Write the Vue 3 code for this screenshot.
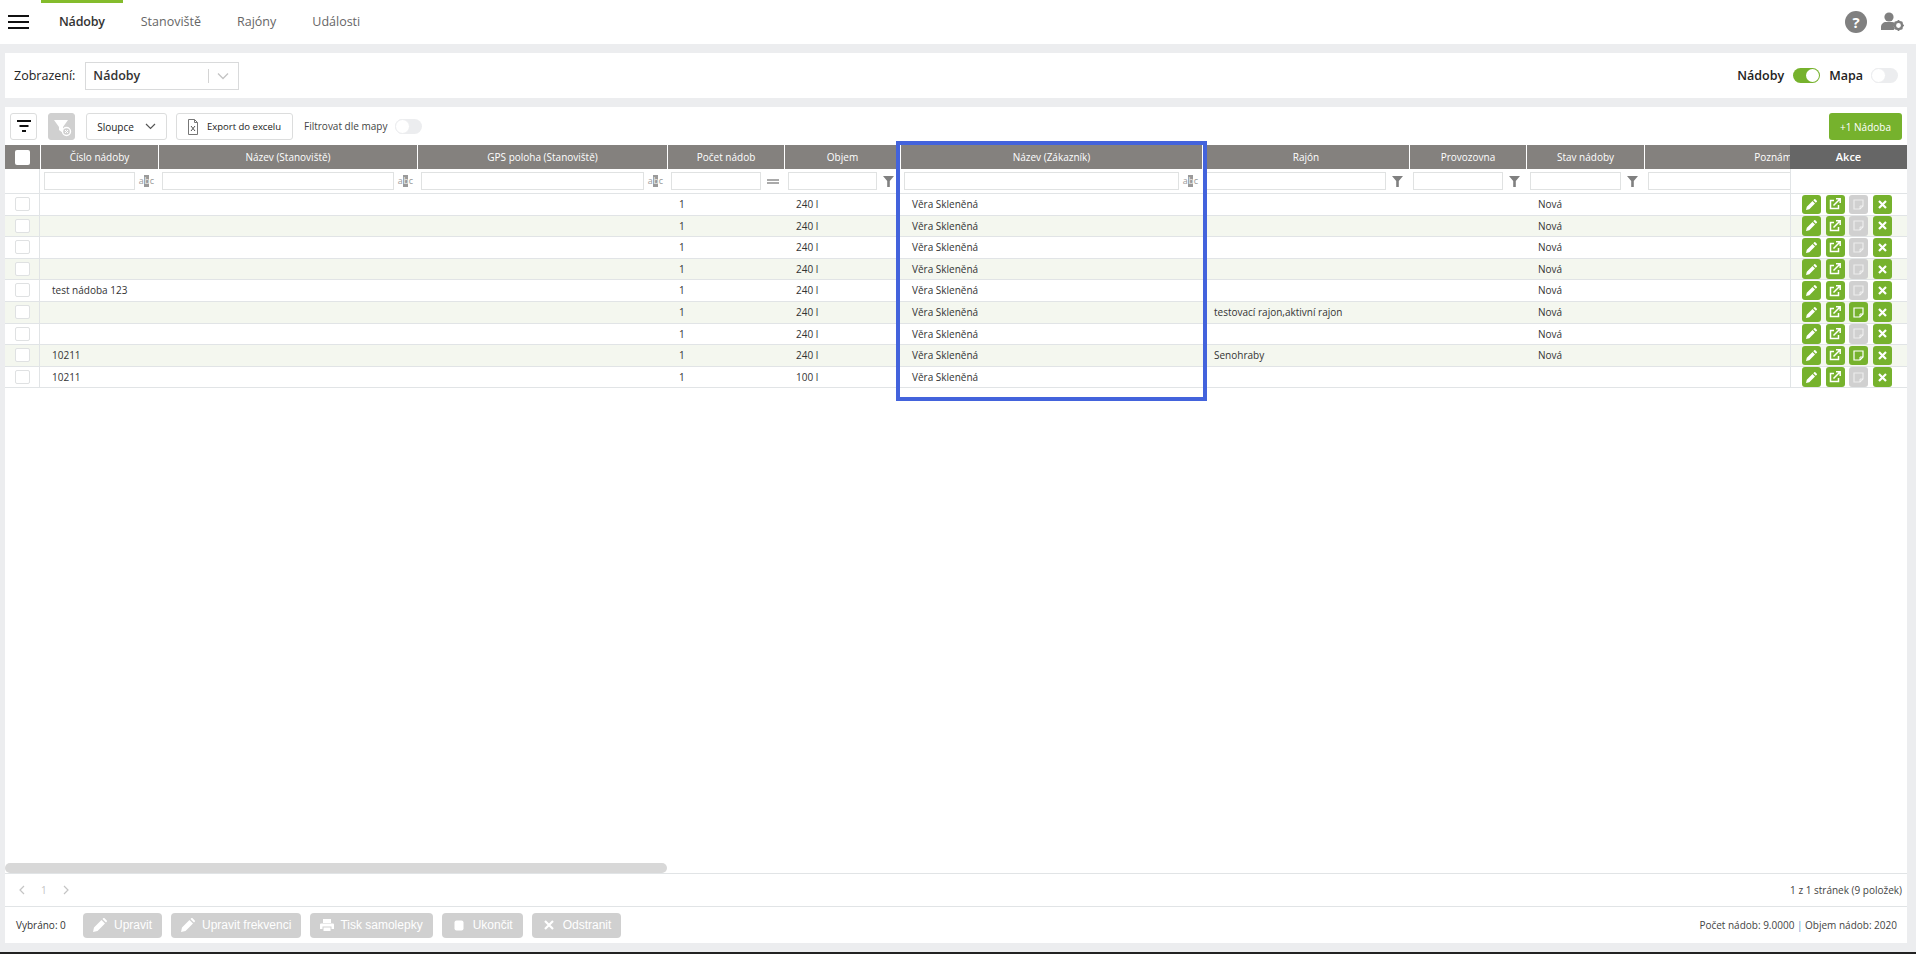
<script setup>
const tabs = ['Nádoby', 'Stanoviště', 'Rajóny', 'Události']
const columns = [
  { label: 'Číslo nádoby', filter: 'abc' },
  { label: 'Název (Stanoviště)', filter: 'abc' },
  { label: 'GPS poloha (Stanoviště)', filter: 'abc' },
  { label: 'Počet nádob', filter: 'eq' },
  { label: 'Objem', filter: 'funnel' },
  { label: 'Název (Zákazník)', filter: 'abc' },
  { label: 'Rajón', filter: 'funnel' },
  { label: 'Provozovna', filter: 'funnel' },
  { label: 'Stav nádoby', filter: 'funnel' },
  { label: 'Poznámka', filter: 'abc' }
]
const z = 'Věra Skleněná'
const rows = [
  { id: '', vol: '240 l', raj: '', st: 'Nová', note: false },
  { id: '', vol: '240 l', raj: '', st: 'Nová', note: false },
  { id: '', vol: '240 l', raj: '', st: 'Nová', note: false },
  { id: '', vol: '240 l', raj: '', st: 'Nová', note: false },
  { id: 'test nádoba 123', vol: '240 l', raj: '', st: 'Nová', note: false },
  { id: '', vol: '240 l', raj: 'testovací rajon,aktivní rajon', st: 'Nová', note: true },
  { id: '', vol: '240 l', raj: '', st: 'Nová', note: false },
  { id: '10211', vol: '240 l', raj: 'Senohraby', st: 'Nová', note: true },
  { id: '10211', vol: '100 l', raj: '', st: '', note: false }
]
const cells = (r) => [r.id, '', '', '1', r.vol, z, r.raj, '', r.st, '']
</script>

<template>
  <div class="page">
    <header class="topbar">
      <div class="burger"><i></i><i></i><i></i></div>
      <nav class="tabs">
        <a v-for="(t, i) in tabs" :key="t" class="tab" :class="{ active: i === 0 }">{{ t }}</a>
      </nav>
      <div class="top-icons">
        <span class="help">?</span>
        <svg class="usergear" width="23" height="22" viewBox="0 0 23 22">
          <circle cx="8" cy="6" r="4.6" fill="#808080" />
          <path d="M0 19v-3c0-3 2.500-5 5-5h6c1 0 2 .3 2.800 1l-1.300 2.500 1 3-.8 1.500z" fill="#808080" />
          <circle cx="17.500" cy="14.500" r="3.600" fill="none" stroke="#808080" stroke-width="2.400" />
          <path d="M17.500 9v2M17.500 18v2M12 14.500h2M21 14.500h2M13.700 10.700l1.400 1.400M19.900 16.900l1.400 1.400M13.700 18.300l1.400-1.400M19.900 12.100l1.400-1.400" stroke="#808080" stroke-width="1.600" />
        </svg>
      </div>
    </header>

    <section class="viewbar">
      <label class="view-label">Zobrazení:</label>
      <div class="select">
        <span class="select-val">Nádoby</span>
        <span class="select-sep"></span>
        <svg width="12" height="8" viewBox="0 0 12 8"><path d="M1 1.500l5 5 5-5" fill="none" stroke="#c4c4c4" stroke-width="1.300" /></svg>
      </div>
      <div class="spacer"></div>
      <b class="sw-label">Nádoby</b>
      <span class="switch on"><i></i></span>
      <b class="sw-label map">Mapa</b>
      <span class="switch"><i></i></span>
    </section>

    <section class="panel">
      <div class="toolbar">
        <button class="btn square">
          <svg width="14" height="13" viewBox="0 0 14 13"><path d="M0 1h14M2.500 6h9M5 11h4" stroke="#111" stroke-width="2" /></svg>
        </button>
        <button class="btn square grey">
          <svg width="20" height="20" viewBox="0 0 20 20">
            <path d="M2 3h14l-5 7v6l-4-3v-3z" fill="#fff" />
            <circle cx="14.500" cy="14.500" r="4" fill="#d0d0d0" stroke="#fff" stroke-width="1.400" />
            <path d="M13 13l3 3M16 13l-3 3" stroke="#fff" stroke-width="1" />
          </svg>
        </button>
        <button class="btn columns">
          <span>Sloupce</span>
          <svg width="11" height="7" viewBox="0 0 11 7"><path d="M1 1l4.500 4.500L10 1" fill="none" stroke="#555" stroke-width="1.200" /></svg>
        </button>
        <button class="btn export">
          <svg width="10" height="16" viewBox="0 0 10 16">
            <path d="M.5.500h6l3 3v12h-9z" fill="none" stroke="#777" />
            <path d="M6.500.500v3h3" fill="none" stroke="#777" />
            <path d="M3 7l4 5M7 7l-4 5" stroke="#555" stroke-width="1" />
          </svg>
          <span>Export do excelu</span>
        </button>
        <span class="filter-map">Filtrovat dle mapy</span>
        <span class="switch small"><i></i></span>
        <div class="spacer"></div>
        <button class="add">+1 Nádoba</button>
      </div>

      <div class="table">
        <div class="grid head">
          <div class="hcell first"><span class="cb white"></span></div>
          <div v-for="c in columns" :key="c.label" class="hcell">{{ c.label }}</div>
        </div>
        <div class="grid filters">
          <div class="fcell first"></div>
          <div v-for="c in columns" :key="c.label" class="fcell">
            <span class="finput"></span>
            <span class="ficon">
              <span v-if="c.filter === 'abc'" class="abc">a<em>b</em>c</span>
              <span v-else-if="c.filter === 'eq'" class="eq"></span>
              <svg v-else width="11" height="11" viewBox="0 0 11 11"><path d="M0 0h11L6.800 5v6H4.200V5z" fill="#808080" /></svg>
            </span>
          </div>
        </div>
        <div v-for="(r, i) in rows" :key="i" class="grid row" :class="{ alt: i % 2 === 1 }">
          <div class="cell first"><span class="cb"></span></div>
          <div v-for="(v, j) in cells(r)" :key="j" class="cell">{{ v }}</div>
        </div>

        <div class="actions">
          <div class="act-head">Akce</div>
          <div class="act-filter"></div>
          <div v-for="(r, i) in rows" :key="i" class="act-row" :class="{ alt: i % 2 === 1 }">
            <span class="ab">
              <svg width="11" height="11" viewBox="0 0 11 11"><path d="M0 11l.8-3.200L6.500 2l2.500 2.500-5.700 5.700zM7.300 1.200L8.300.2a.7.7 0 0 1 1 0l1.500 1.500a.7.7 0 0 1 0 1l-1 1z" fill="#fff" /></svg>
            </span>
            <span class="ab">
              <svg width="12" height="12" viewBox="0 0 12 12"><path d="M9.500 7v3.500h-8v-8H5" fill="none" stroke="#fff" stroke-width="1.500" /><path d="M4.500 7.500L10.500 1.500M7 .8h4.200V5" fill="none" stroke="#fff" stroke-width="1.500" /></svg>
            </span>
            <span class="ab" :class="{ off: !r.note }">
              <svg width="11" height="11" viewBox="0 0 11 11"><path d="M1 1h9v6l-3 3H1z" fill="none" stroke="#fff" stroke-width="1.200" :opacity="r.note ? 1 : .6" /><path d="M10 7H7v3" fill="none" stroke="#fff" stroke-width="1" :opacity="r.note ? 1 : .6" /></svg>
            </span>
            <span class="ab">
              <svg width="9" height="9" viewBox="0 0 9 9"><path d="M1 1l7 7M8 1L1 8" stroke="#fff" stroke-width="2.200" /></svg>
            </span>
          </div>
        </div>
      </div>

      <div class="scrollarea"><div class="thumb"></div></div>

      <div class="pager">
        <span class="pg">
          <svg width="7" height="10" viewBox="0 0 7 10"><path d="M6 1L2 5l4 4" fill="none" stroke="#c4c4c4" stroke-width="1.200" /></svg>
          <span class="pg-num">1</span>
          <svg width="7" height="10" viewBox="0 0 7 10"><path d="M1 1l4 4-4 4" fill="none" stroke="#c4c4c4" stroke-width="1.200" /></svg>
        </span>
        <div class="spacer"></div>
        <span class="pg-info">1 z 1 stránek (9 položek)</span>
      </div>

      <div class="footer">
        <span class="selected">Vybráno: 0</span>
        <button class="fbtn">
          <svg width="14" height="14" viewBox="0 0 14 14"><path d="M0 14l1-4.500L8.500 2l3.500 3.500L4.500 13zM9.500 1l.7-.7a1 1 0 0 1 1.400 0l2.100 2.100a1 1 0 0 1 0 1.400l-.7.700z" fill="#fff" /></svg>
          Upravit
        </button>
        <button class="fbtn">
          <svg width="14" height="14" viewBox="0 0 14 14"><path d="M0 14l1-4.500L8.500 2l3.500 3.500L4.500 13zM9.500 1l.7-.7a1 1 0 0 1 1.400 0l2.100 2.100a1 1 0 0 1 0 1.400l-.7.700z" fill="#fff" /></svg>
          Upravit frekvenci
        </button>
        <button class="fbtn print">
          <svg width="14" height="14" viewBox="0 0 14 14"><path d="M3 5V1h8v4zM1 5.500h12a1 1 0 0 1 1 1V11h-2.500V8.500h-9V11H0V6.500a1 1 0 0 1 1-1zM3.500 9.500h7V13h-7z" fill="#fff" /></svg>
          Tisk samolepky
        </button>
        <button class="fbtn">
          <svg class="ic-stop" width="10" height="11" viewBox="0 0 10 11"><rect x="0.500" y="0.500" width="9" height="10" rx="2" fill="#fff" /></svg>
          Ukončit
        </button>
        <button class="fbtn">
          <svg class="ic-x" width="10" height="10" viewBox="0 0 10 10"><path d="M1 1l8 8M9 1l-8 8" stroke="#fff" stroke-width="2.200" /></svg>
          Odstranit
        </button>
        <div class="spacer"></div>
        <span class="totals">Počet nádob: 9.0000 <i>|</i> Objem nádob: 2020</span>
      </div>

      <div class="highlight"></div>
    </section>
    <div class="darkbar"></div>
  </div>
</template>

<style>
html, body { margin: 0; background: #ecedef; }
</style>

<style scoped>
* { box-sizing: border-box; }
.page {
  width: 1916px; height: 954px; display: flex; flex-direction: column; overflow: hidden;
  background: #ecedef; font-family: "Open Sans", sans-serif; color: #333;
}
.spacer { flex: 1; }
button { font-family: inherit; padding: 0; margin: 0; cursor: default; }

.topbar { height: 44px; flex: none; background: #fff; display: flex; align-items: center; }
.burger { width: 21px; margin-left: 8px; margin-right: 12px; display: flex; flex-direction: column; gap: 4px; }
.burger i { display: block; height: 2px; background: #111; }
.tabs { display: flex; height: 44px; }
.tab { padding: 0 18px; font-size: 12.500px; color: #666; border-top: 3px solid transparent; line-height: 37px; }
.tab.active { border-top-color: #84bc2c; color: #333; font-weight: 600; letter-spacing: -.2px; }
.top-icons { margin-left: auto; margin-right: 12px; display: flex; align-items: center; gap: 14px; }
.help {
  width: 22px; height: 22px; border-radius: 50%; background: #808080; color: #fff;
  font: 700 15px/22px "Open Sans", sans-serif; text-align: center;
}

.viewbar {
  height: 45px; flex: none; margin: 9px 9px 0 5px; background: #fff; display: flex; align-items: center;
  padding-right: 9px;
}
.view-label { margin-left: 9px; font-size: 12.500px; color: #222; }
.select {
  margin-left: 10px; width: 154px; height: 28px; border: 1px solid #d9dadb; display: flex; align-items: center;
}
.select-val { margin-left: 7px; width: 115px; font-size: 12.500px; font-weight: 600; color: #333; }
.select-sep { width: 1px; height: 14px; background: #d4d4d4; margin-right: 8px; }
.sw-label { font-size: 12.500px; font-weight: 600; color: #222; margin-right: 9px; }
.sw-label.map { margin-left: 9px; margin-right: 8px; }
.switch { width: 27px; height: 15px; border-radius: 8px; background: #ecedef; position: relative; display: block; flex: none; }
.switch i { position: absolute; left: 0; top: 0; width: 15px; height: 15px; border-radius: 50%; background: #fff; border: 1px solid #ecedef; }
.switch.on { background: #76b22d; }
.switch.on i { left: 13px; top: 1px; width: 13px; height: 13px; border: 0; }

.panel {
  flex: none; height: 836px; margin: 9px 9px 0 5px; background: #fff; display: flex; flex-direction: column; position: relative;
}
.toolbar { height: 38px; flex: none; display: flex; align-items: flex-start; padding: 6px 5px 0 5px; }
.btn {
  height: 27px; background: #fff; border: 1px solid #dcdddd; border-radius: 3px; display: flex; align-items: center;
  justify-content: center; font-size: 10px; color: #222;
}
.btn.square { width: 27px; }
.btn.square.grey { margin-left: 11px; background: #d0d0d0; border-color: #d0d0d0; }
.btn.columns { margin-left: 11px; width: 81px; gap: 11px; }
.btn.export { margin-left: 9px; width: 117px; gap: 9px; font-size: 9.500px; }
.filter-map { margin-left: 11px; font-size: 10px; line-height: 26px; color: #444; }
.switch.small { margin-left: 8px; margin-top: 6px; }
.add {
  width: 73px; height: 27px; background: #76b22d; color: #fff; border: 0; border-radius: 3px; font-size: 10px;
}

.table { position: relative; overflow: hidden; flex: none; height: 244px; }
.grid {
  display: grid; width: 1912px;
  grid-template-columns: 35px 118px 259px 250px 117px 116px 302px 207px 117px 118px 268px;
}
.head { height: 24px; background: #84817e; }
.hcell {
  border-left: 1px solid #fff; color: #fff; font-size: 10px; line-height: 24px; text-align: center; white-space: nowrap;
}
.hcell.first { border-left: 0; position: relative; }
.cb {
  position: absolute; left: 10px; top: 3px; width: 15px; height: 14px; border: 1px solid #dfe1e2; border-radius: 2px; background: #fff;
}
.cb.white { top: 5px; height: 15px; border: 0; }
.filters { height: 25px; border-bottom: 1px solid #e1e4e6; }
.fcell { display: flex; align-items: flex-start; padding: 3px 0 0 4px; }
.fcell.first { border-right: 1px solid #e1e4e6; padding: 0; }
.finput { flex: 1; min-width: 0; height: 18px; border: 1px solid #e0e2e2; background: #fff; }
.ficon { width: 23px; height: 18px; flex: none; display: flex; align-items: center; justify-content: center; }
.abc { font-size: 9px; line-height: 12px; color: #9a9a9a; display: flex; }
.abc em { font-style: normal; background: #9a9a9a; color: #eee; width: 5px; margin: 0 .5px; text-align: center; }
.eq { width: 12px; height: 5px; border-top: 2px solid #aaa; border-bottom: 2px solid #aaa; }
.row { height: 21.600px; border-bottom: 1px solid #e1e4e6; }
.row.alt { background: #f4f7ef; }
.cell { font-size: 10px; line-height: 20px; padding-left: 12px; white-space: nowrap; color: #333; position: relative; }
.cell.first { border-right: 1px solid #e1e4e6; padding: 0; }

.actions { position: absolute; right: 0; top: 0; width: 117px; background: #fff; }
.act-head { height: 24px; background: rgba(90, 90, 90, .93); color: #fff; font-size: 11px; font-weight: 600; line-height: 24px; text-align: center; }
.act-filter { height: 25px; border-bottom: 1px solid #e1e4e6; border-left: 1px solid #e1e4e6; }
.act-row {
  height: 21.600px; border-bottom: 1px solid #e1e4e6; border-left: 1px solid #e1e4e6; display: flex; gap: 4.500px; padding: .5px 0 0 11px;
}
.act-row.alt { background: #f4f7ef; }
.ab { width: 19px; height: 19.500px; background: #76b22d; border-radius: 3px; display: flex; align-items: center; justify-content: center; }
.ab.off { background: #d0d0d0; }

.scrollarea { flex: 1; display: flex; align-items: flex-end; }
.thumb { width: 662px; height: 10px; border-radius: 5px; background: #d8d8d8; }
.pager { height: 33px; flex: none; border-top: 1px solid #e1e4e6; display: flex; align-items: center; padding: 0 5px 0 13px; }
.pg { display: flex; align-items: center; gap: 16px; width: 60px; }
.pg-num { font-size: 10px; color: #c4c4c4; }
.pg-info { font-size: 10px; color: #444; }
.footer { height: 37px; flex: none; border-top: 1px solid #e1e4e6; display: flex; align-items: center; padding: 0 10px 0 11px; gap: 9px; }
.selected { font-size: 10px; color: #333; width: 58px; margin-right: 0; }
.fbtn {
  height: 25px; padding: 0 10px; background: #d0d0d0; border: 0; border-radius: 4px; color: #fff; display: flex; align-items: center; gap: 7px;
  font: 12px "Liberation Sans", sans-serif;
}
.fbtn.print { gap: 6px; }
.ic-stop, .ic-x { margin: 0 2px 0 2px; }
.totals { font-size: 10px; color: #444; }
.totals i { font-style: normal; color: #5b9bd5; }

.highlight { position: absolute; left: 891px; top: 34px; width: 311px; height: 260px; border: 4px solid #4363dc; pointer-events: none; }
.darkbar { flex: 1; margin-top: 9px; background: #222; }
</style>
